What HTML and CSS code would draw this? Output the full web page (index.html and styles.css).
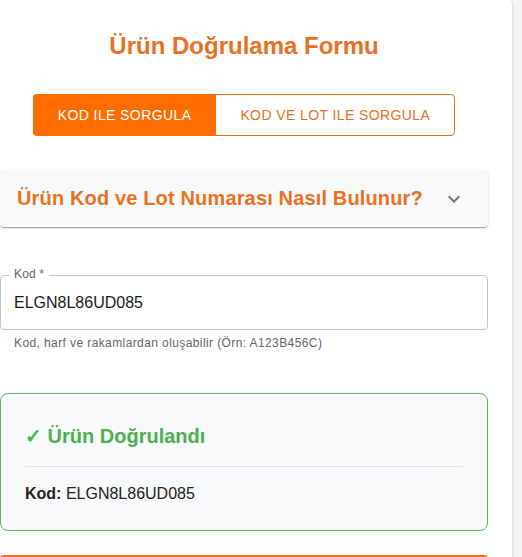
FILE: index.html
```html
<!DOCTYPE html>
<html lang="tr">
<head>
<meta charset="utf-8">
<link rel="stylesheet" href="styles.css">
</head>
<body>
<div class="card">
  <h1 class="title">Ürün Doğrulama Formu</h1>
  <div class="toggle">
    <button class="tbtn active">KOD ILE SORGULA</button>
    <button class="tbtn">KOD VE LOT ILE SORGULA</button>
  </div>
  <div class="accordion">
    <span class="acc-title">Ürün Kod ve Lot Numarası Nasıl Bulunur?</span>
    <svg class="chev" width="24" height="24" viewBox="0 0 24 24"><path d="M7.41 8.59 12 13.17l4.59-4.58L18 10l-6 6-6-6z" fill="#757575"/></svg>
  </div>
  <div class="field">
    <fieldset class="outline"><legend>Kod *</legend></fieldset>
    <span class="label">Kod *</span>
    <div class="value">ELGN8L86UD085</div>
  </div>
  <p class="helper">Kod, harf ve rakamlardan oluşabilir (Örn: A123B456C)</p>
  <div class="result">
    <h2 class="res-title"><span class="check">✓</span> Ürün Doğrulandı</h2>
    <hr class="divider">
    <p class="res-row"><b>Kod:</b> ELGN8L86UD085</p>
  </div>
  <div class="submit"></div>
</div>
</body>
</html>
```
FILE: styles.css
```css
* { box-sizing: border-box; }
body {
  margin: 0;
  background: #f4f4f4;
  font-family: "Liberation Sans", Arial, sans-serif;
  overflow: hidden;
}
.card {
  margin: -4px 0 0 -24px;
  width: 536px;
  padding: 34px 24px 40px;
  background: #fff;
  border-radius: 8px;
  box-shadow: 0 2px 4px rgba(0,0,0,0.12), 0 0 2px rgba(0,0,0,0.08);
}
.title {
  margin: 0;
  text-align: center;
  font-size: 24px;
  font-weight: bold;
  color: #e8711f;
  line-height: 32px;
}
.toggle {
  display: flex;
  justify-content: center;
  margin-top: 32px;
}
.tbtn {
  height: 42px;
  padding: 0 24px;
  font-family: "Liberation Sans", Arial, sans-serif;
  font-size: 14px;
  letter-spacing: 0.4px;
  background: #fff;
  color: #e8711f;
  border: 1px solid #e8711f;
  cursor: pointer;
}
.tbtn:first-child { border-radius: 4px 0 0 4px; border-right: none; }
.tbtn:last-child { border-radius: 0 4px 4px 0; }
.tbtn.active { background: #ff6d00; border-color: #ff6d00; color: #fff; }
.accordion {
  margin-top: 34px;
  height: 57px;
  display: flex;
  align-items: center;
  justify-content: space-between;
  padding: 0 22px 0 17px;
  background: #f8f9fa;
  border-radius: 4px;
  box-shadow: 0 2px 1px -1px rgba(0,0,0,0.2), 0 1px 1px rgba(0,0,0,0.14), 0 1px 3px rgba(0,0,0,0.12);
}
.acc-title {
  font-size: 20px;
  letter-spacing: 0.15px;
  font-weight: bold;
  color: #e8711f;
}
.field {
  position: relative;
  margin-top: 48px;
  height: 55px;
}
.outline {
  position: absolute;
  top: -5px;
  bottom: 0;
  left: 0;
  right: 0;
  margin: 0;
  padding: 0 8px;
  border: 1px solid #c4c4c4;
  border-radius: 4px;
}
.outline legend {
  font-size: 12px;
  letter-spacing: 0.15px;
  visibility: hidden;
  padding: 0 5px;
  line-height: 10px;
}
.label {
  position: absolute;
  left: 14px;
  top: -8px;
  font-size: 12px;
  line-height: 14px;
  letter-spacing: 0.15px;
  color: #666;
}
.value {
  padding: 19px 14px 0;
  font-size: 16px;
  line-height: 18px;
  color: #1a1a1a;
}
.helper {
  margin: 3px 0 0 14px;
  font-size: 12px;
  line-height: 20px;
  letter-spacing: 0.4px;
  color: #666;
}
.result {
  margin-top: 40px;
  padding: 24px 24px 27px;
  border: 1px solid #5fb160;
  border-radius: 8px;
  background: #f8f9fa;
}
.res-title {
  margin: 6px 0 0;
  font-size: 20px;
  line-height: 24px;
  font-weight: bold;
  color: #4caf50;
}
.check {
  font-weight: normal;
  -webkit-text-stroke: 0.7px #4caf50;
}
.divider {
  margin: 18px 0 18px;
  border: 0;
  border-top: 1px solid #dee2e6;
}
.res-row {
  margin: 0;
  font-size: 16px;
  line-height: 18px;
  color: #222;
}
.submit {
  margin-top: 24px;
  height: 42px;
  background: #e8711f;
  border-radius: 4px;
}
```
